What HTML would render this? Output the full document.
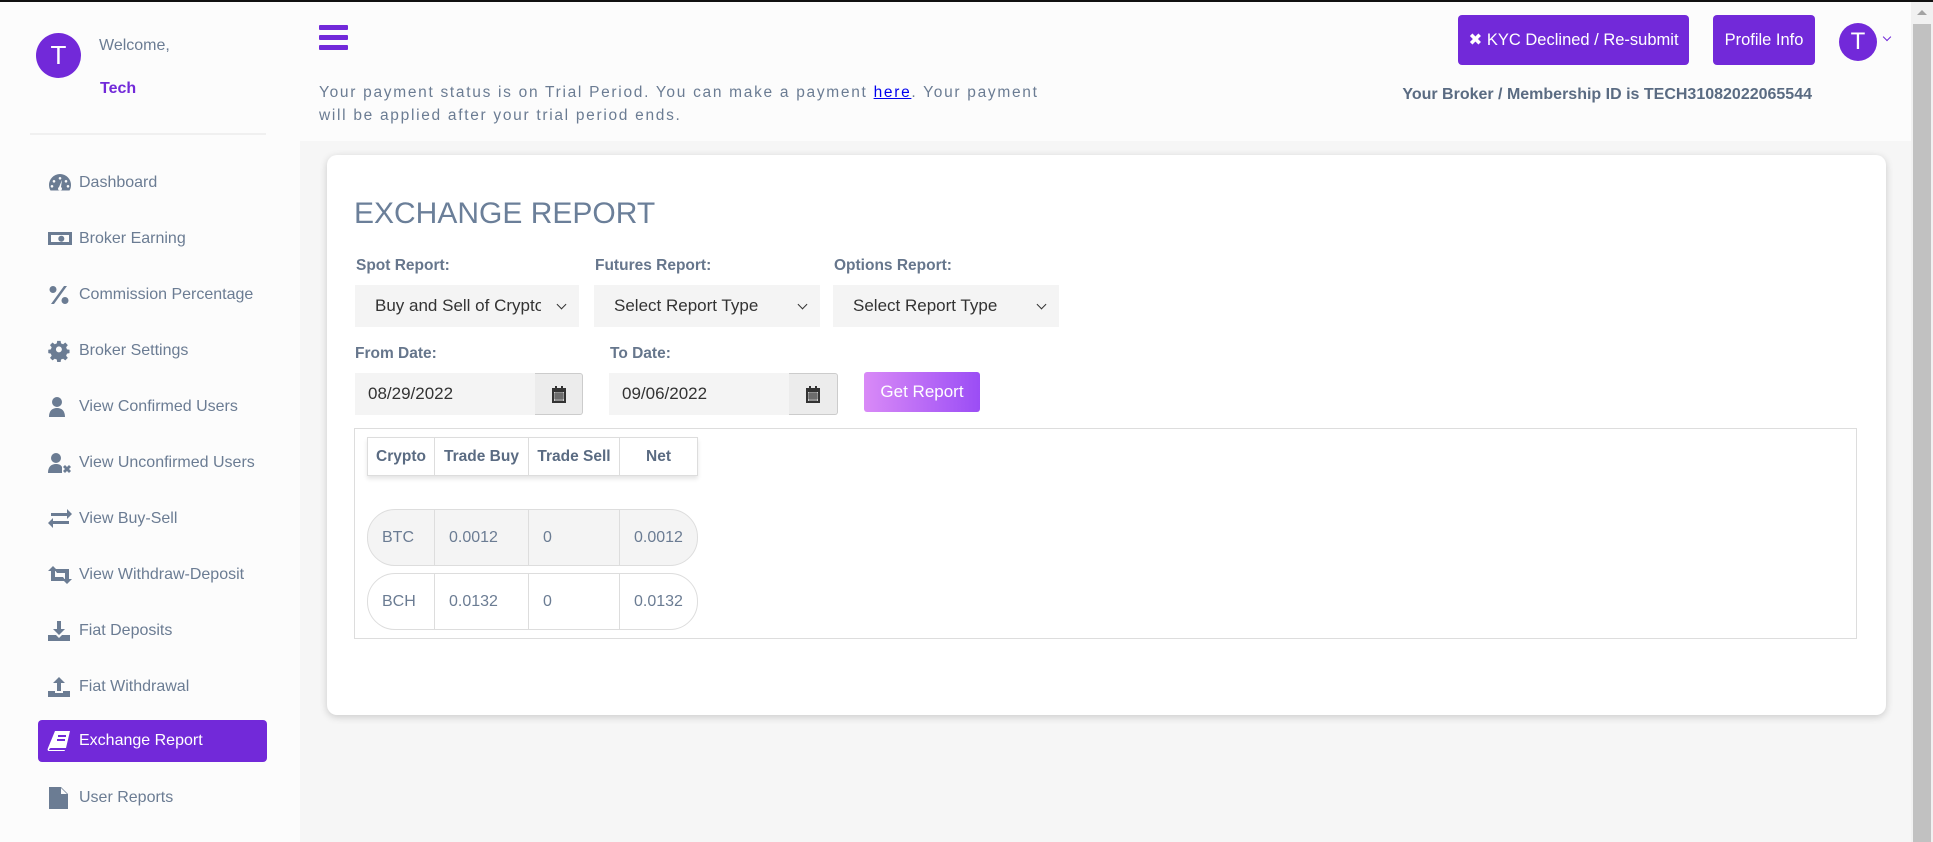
<!DOCTYPE html>
<html><head><meta charset="utf-8"><style>
*{margin:0;padding:0;box-sizing:border-box}
body{width:1933px;height:842px;overflow:hidden;background:#f6f6f6;font-family:"Liberation Sans",Arial,sans-serif;position:relative;color:#6b7c93}
.a{position:absolute}
#top{left:0;top:0;width:1933px;height:2px;background:#111}
#side{left:0;top:2px;width:300px;height:840px;background:#fcfcfc}
#head{left:300px;top:2px;width:1611px;height:139px;background:#fcfcfc}
.av{border-radius:50%;background:#7229d9;color:#fff;display:flex;align-items:center;justify-content:center}
.mi{left:47px;font-size:16px;color:#6b7c93;height:24px;line-height:24px;display:flex;align-items:center}
.mi svg{width:26px;height:22px;margin-right:6px;fill:#6b7c93}
.lbl{font-size:15.5px;font-weight:bold;color:#66768c}
.sel{background:#f4f4f4;font-size:17px;color:#333;display:flex;align-items:center;padding-left:20px;height:42px;overflow:hidden;white-space:nowrap}
.sel:after{content:"";position:absolute;right:14px;top:16px;width:6px;height:6px;border-right:1.6px solid #333;border-bottom:1.6px solid #333;transform:rotate(45deg)}
.inp{background:#f4f4f4;font-size:17px;color:#333;height:42px;line-height:42px;padding-left:13px}
.cal{background:#ececec;border:1px solid #ccc;border-left:none;border-radius:0 3px 3px 0;display:flex;align-items:center;justify-content:center}
.th{font-size:15.5px;font-weight:bold;color:#5a6b82;display:flex;align-items:center;justify-content:center;border-right:1px solid #ddd;height:100%}
.row{border:1px solid #ddd;border-radius:28px;display:flex;overflow:hidden}
.row div{border-right:1px solid #ddd;font-size:16px;color:#6b7c93;display:flex;align-items:center;padding-left:14px;height:100%}
</style></head><body>
<div class="a" id="top"></div>
<div class="a" id="side"></div>
<div class="a" id="head"></div>
<div class="a" style="left:1911px;top:2px;width:22px;height:840px;background:#f1f1f1"></div>
<div class="a" style="left:1913px;top:24px;width:18px;height:818px;background:#c1c1c1"></div>
<div class="a" style="left:1917px;top:10px;width:0;height:0;border-left:5px solid transparent;border-right:5px solid transparent;border-bottom:5px solid #a3a3a3"></div>

<div class="a av" style="left:36px;top:33px;width:45px;height:45px;font-size:26px">T</div>
<div class="a" style="left:99px;top:37px;font-size:16px;color:#6b7c93">Welcome,</div>
<div class="a" style="left:100px;top:80px;font-size:16px;font-weight:bold;color:#7229d9">Tech</div>
<div class="a" style="left:30px;top:133px;width:236px;height:2px;background:#f0f0f0"></div>

<div class="a mi" style="top:171px"><svg viewBox="0 0 26 22"><path d="M13 2A11 11 0 0 0 2 13c0 2 .5 4 1.5 5.5h19c1-1.5 1.5-3.5 1.5-5.5A11 11 0 0 0 13 2zm0 3a1.3 1.3 0 1 1 0 2.6A1.3 1.3 0 0 1 13 5zM7 8a1.3 1.3 0 1 1 0 2.6A1.3 1.3 0 0 1 7 8zm12 0a1.3 1.3 0 1 1 0 2.6A1.3 1.3 0 0 1 19 8zM5 13a1.3 1.3 0 1 1 0 2.6A1.3 1.3 0 0 1 5 13zm16 0a1.3 1.3 0 1 1 0 2.6A1.3 1.3 0 0 1 21 13zm-6-5l-1 7a2 2 0 1 1-2 0z"/></svg>Dashboard</div>
<div class="a mi" style="top:227px"><svg viewBox="0 0 26 22"><path d="M1 4h24v13H1zm3 3v7h18V7zm9 1a3 3 0 1 1 0 5.4A3 3 0 0 1 13 8z"/></svg>Broker Earning</div>
<div class="a mi" style="top:283px"><svg viewBox="0 0 26 22"><path d="M6 2a3.5 3.5 0 1 1 0 7 3.5 3.5 0 0 1 0-7zm12 11a3.5 3.5 0 1 1 0 7 3.5 3.5 0 0 1 0-7zM17 2h3L7 20H4z"/></svg>Commission Percentage</div>
<div class="a mi" style="top:339px"><svg viewBox="0 0 26 22"><path d="M11 1h4l.5 3 2.5 1 2.5-2 3 3-2 2.5 1 2.5 3 .5v4l-3 .5-1 2.5 2 2.5-3 3-2.5-2-2.5 1-.5 3h-4l-.5-3-2.5-1-2.5 2-3-3 2-2.5-1-2.5-3-.5v-4l3-.5 1-2.5-2-2.5 3-3 2.5 2 2.5-1zm2 6.5a3.5 3.5 0 1 0 0 7 3.5 3.5 0 0 0 0-7z" transform="scale(.85) translate(1,0)"/></svg>Broker Settings</div>
<div class="a mi" style="top:395px"><svg viewBox="0 0 26 22"><path d="M10 1a5 5 0 1 1 0 10 5 5 0 0 1 0-10zM2 21c0-6 3-9 8-9s8 3 8 9z"/></svg>View Confirmed Users</div>
<div class="a mi" style="top:451px"><svg viewBox="0 0 26 22"><path d="M9 1a5 5 0 1 1 0 10A5 5 0 0 1 9 1zM1 21c0-6 3-9 8-9 3 0 5 1 6 3v6zm15-6l2-2 2 2 2-2 2 2-2 2 2 2-2 2-2-2-2 2-2-2 2-2z"/></svg>View Unconfirmed Users</div>
<div class="a mi" style="top:507px"><svg viewBox="0 0 26 22"><path d="M4 5h16V1l5 5-5 5V8H4zm18 8v3H6v4l-5-5 5-5v3z"/></svg>View Buy-Sell</div>
<div class="a mi" style="top:563px"><svg viewBox="0 0 26 22"><path d="M6 2l5 5H8v6h8l3 4H4V7H1zm14 18l-5-5h3V9h-8L7 5h15v10h3z"/></svg>View Withdraw-Deposit</div>
<div class="a mi" style="top:619px"><svg viewBox="0 0 26 22"><path d="M10 1h4v8h4l-6 6-6-6h4zM1 15h8l3 3 3-3h8v6H1z"/></svg>Fiat Deposits</div>
<div class="a mi" style="top:675px"><svg viewBox="0 0 26 22"><path d="M12 1l6 6h-4v8h-4V7H6zM1 15h7v2h8v-2h7v6H1z"/></svg>Fiat Withdrawal</div>
<div class="a" style="left:38px;top:720px;width:229px;height:42px;background:#7229d9;border-radius:4px"></div>
<div class="a mi" style="top:729px;color:#fff"><svg viewBox="0 0 26 22" style="fill:#fff"><path d="M8 1h15l-4 17H4c-1 0-2 1-2 2h16l-.5 1H2C1 21 0 20 1 18zm3 4v2h8V5zm-1 4v2h8V9z"/></svg>Exchange Report</div>
<div class="a mi" style="top:786px"><svg viewBox="0 0 26 22"><path d="M2 0h12l7 7v15H2zm12 1v6h6zM6 11h11v2H6zm0 4h11v2H6z"/></svg>User Reports</div>

<div class="a" style="left:319px;top:25px;width:29px;height:5px;background:#7229d9;border-radius:1px"></div>
<div class="a" style="left:319px;top:35px;width:29px;height:5px;background:#7229d9;border-radius:1px"></div>
<div class="a" style="left:319px;top:45px;width:29px;height:5px;background:#7229d9;border-radius:1px"></div>
<div class="a" style="left:319px;top:81px;width:720px;font-size:15.5px;letter-spacing:1.7px;line-height:23px;color:#6b7c93">Your payment status is on Trial Period. You can make a payment <span style="color:#0000ee;text-decoration:underline">here</span>. Your payment will be applied after your trial period ends.</div>

<div class="a" style="left:1458px;top:15px;width:231px;height:50px;background:#7229d9;border-radius:4px;color:#fff;font-size:16.5px;display:flex;align-items:center;justify-content:center">✖ KYC Declined / Re-submit</div>
<div class="a" style="left:1713px;top:15px;width:102px;height:50px;background:#7229d9;border-radius:4px;color:#fff;font-size:16.5px;display:flex;align-items:center;justify-content:center">Profile Info</div>
<div class="a av" style="left:1839px;top:23px;width:38px;height:38px;font-size:24px">T</div>
<div class="a" style="left:1884px;top:34px;width:6px;height:6px;border-right:1.3px solid #7229d9;border-bottom:1.3px solid #7229d9;transform:rotate(45deg)"></div>
<div class="a" style="left:1300px;top:86px;width:512px;text-align:right;font-size:16px;font-weight:bold;color:#5a6b82">Your Broker / Membership ID is TECH31082022065544</div>

<div class="a" style="left:327px;top:155px;width:1559px;height:560px;background:#fff;border-radius:10px;box-shadow:0 2px 8px rgba(0,0,0,.18)"></div>
<div class="a" style="left:354px;top:197px;font-size:30px;color:#6b7f99">EXCHANGE REPORT</div>
<div class="a lbl" style="left:356px;top:257px">Spot Report:</div>
<div class="a lbl" style="left:595px;top:257px">Futures Report:</div>
<div class="a lbl" style="left:834px;top:257px">Options Report:</div>
<div class="a sel" style="left:355px;top:285px;width:224px"><span style="display:inline-block;width:166px;overflow:hidden">Buy and Sell of Crypto</span></div>
<div class="a sel" style="left:594px;top:285px;width:226px">Select Report Type</div>
<div class="a sel" style="left:833px;top:285px;width:226px">Select Report Type</div>
<div class="a lbl" style="left:355px;top:345px">From Date:</div>
<div class="a lbl" style="left:610px;top:345px">To Date:</div>
<div class="a inp" style="left:355px;top:373px;width:180px">08/29/2022</div>
<div class="a cal" style="left:535px;top:373px;width:48px;height:42px"><svg width="16" height="18" viewBox="0 0 16 18"><path d="M1 3h14v15H1z" fill="#333"/><path d="M3 7h10v9H3z" fill="#ccc"/><path d="M3 9h10M3 11h10M3 13h10M5 7v9M7 7v9M9 7v9M11 7v9" stroke="#333" stroke-width=".8"/><rect x="4" y="1" width="2" height="3" fill="#333"/><rect x="10" y="1" width="2" height="3" fill="#333"/></svg></div>
<div class="a inp" style="left:609px;top:373px;width:180px">09/06/2022</div>
<div class="a cal" style="left:789px;top:373px;width:49px;height:42px"><svg width="16" height="18" viewBox="0 0 16 18"><path d="M1 3h14v15H1z" fill="#333"/><path d="M3 7h10v9H3z" fill="#ccc"/><path d="M3 9h10M3 11h10M3 13h10M5 7v9M7 7v9M9 7v9M11 7v9" stroke="#333" stroke-width=".8"/><rect x="4" y="1" width="2" height="3" fill="#333"/><rect x="10" y="1" width="2" height="3" fill="#333"/></svg></div>
<div class="a" style="left:864px;top:372px;width:116px;height:40px;border-radius:3px;background:linear-gradient(90deg,#d98af7,#9b4df5);color:#fff;font-size:17px;display:flex;align-items:center;justify-content:center">Get Report</div>

<div class="a" style="left:354px;top:428px;width:1503px;height:211px;border:1px solid #ddd"></div>
<div class="a" style="left:367px;top:437px;width:331px;height:39px;border:1px solid #ddd;display:flex;box-shadow:0 3px 4px rgba(0,0,0,.1)">
<div class="th" style="width:67px">Crypto</div><div class="th" style="width:94px">Trade Buy</div><div class="th" style="width:91px">Trade Sell</div><div class="th" style="width:77px;border:none">Net</div></div>
<div class="a row" style="left:367px;top:509px;width:331px;height:57px;background:#f4f4f4">
<div style="width:67px">BTC</div><div style="width:94px">0.0012</div><div style="width:91px">0</div><div style="width:77px;border:none">0.0012</div></div>
<div class="a row" style="left:367px;top:573px;width:331px;height:57px;background:#fff">
<div style="width:67px">BCH</div><div style="width:94px">0.0132</div><div style="width:91px">0</div><div style="width:77px;border:none">0.0132</div></div>
</body></html>
